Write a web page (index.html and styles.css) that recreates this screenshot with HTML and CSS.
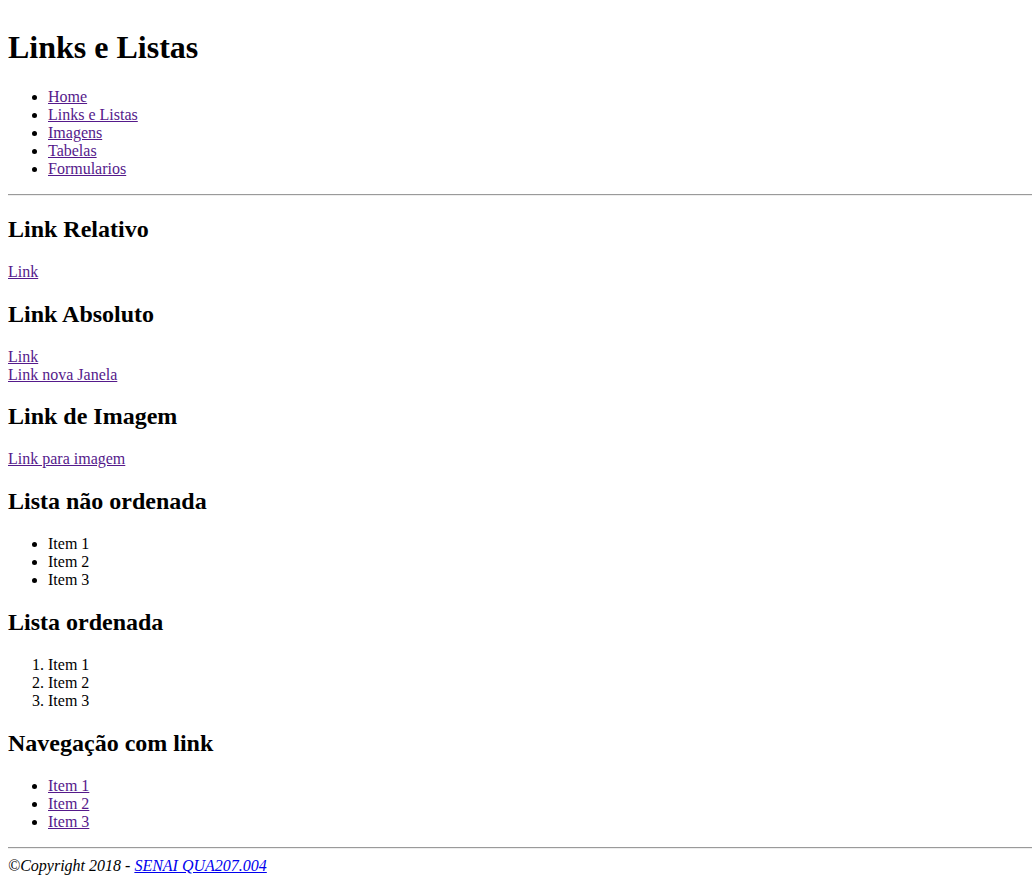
FILE: index.html
```html
<!DOCTYPE html>
<html lang="pt-BR">
<head>
<meta charset="utf-8">
<title>Links e Listas</title>
<link rel="stylesheet" href="styles.css">
</head>
<body>
<header>
<h1>Links e Listas</h1>
<nav>
<ul>
<li><a class="visited" href="#">Home</a></li>
<li><a class="visited" href="#">Links e Listas</a></li>
<li><a class="visited" href="#">Imagens</a></li>
<li><a class="visited" href="#">Tabelas</a></li>
<li><a class="visited" href="#">Formularios</a></li>
</ul>
</nav>
</header>
<hr>
<main>
<h2>Link Relativo</h2>
<a class="visited" href="#">Link</a>
<h2>Link Absoluto</h2>
<a class="visited" href="#">Link</a><br>
<a class="visited" href="#">Link nova Janela</a>
<h2>Link de Imagem</h2>
<a class="visited" href="#">Link para imagem</a>
<h2>Lista não ordenada</h2>
<ul>
<li>Item 1</li>
<li>Item 2</li>
<li>Item 3</li>
</ul>
<h2>Lista ordenada</h2>
<ol>
<li>Item 1</li>
<li>Item 2</li>
<li>Item 3</li>
</ol>
<h2>Navegação com link</h2>
<ul>
<li><a class="visited" href="#">Item 1</a></li>
<li><a class="visited" href="#">Item 2</a></li>
<li><a class="visited" href="#">Item 3</a></li>
</ul>
</main>
<hr>
<footer>
<em>©Copyright 2018 - <a class="fresh" href="#">SENAI QUA207.004</a></em>
</footer>
</body>
</html>
```

FILE: styles.css
```css
html {
  background: #fff;
}
body {
  margin: 0;
  padding: 8px 0 8px 8px;
  font-family: "Liberation Serif", "Times New Roman", serif;
  font-size: 16px;
  color: #000;
}
a.visited {
  color: #551a8b;
}
a.fresh {
  color: #0000ee;
}
hr {
  border: none;
  border-top: 1px solid #9a9a9a;
  border-bottom: 1px solid #eee;
  margin: 8px 0;
}
```
